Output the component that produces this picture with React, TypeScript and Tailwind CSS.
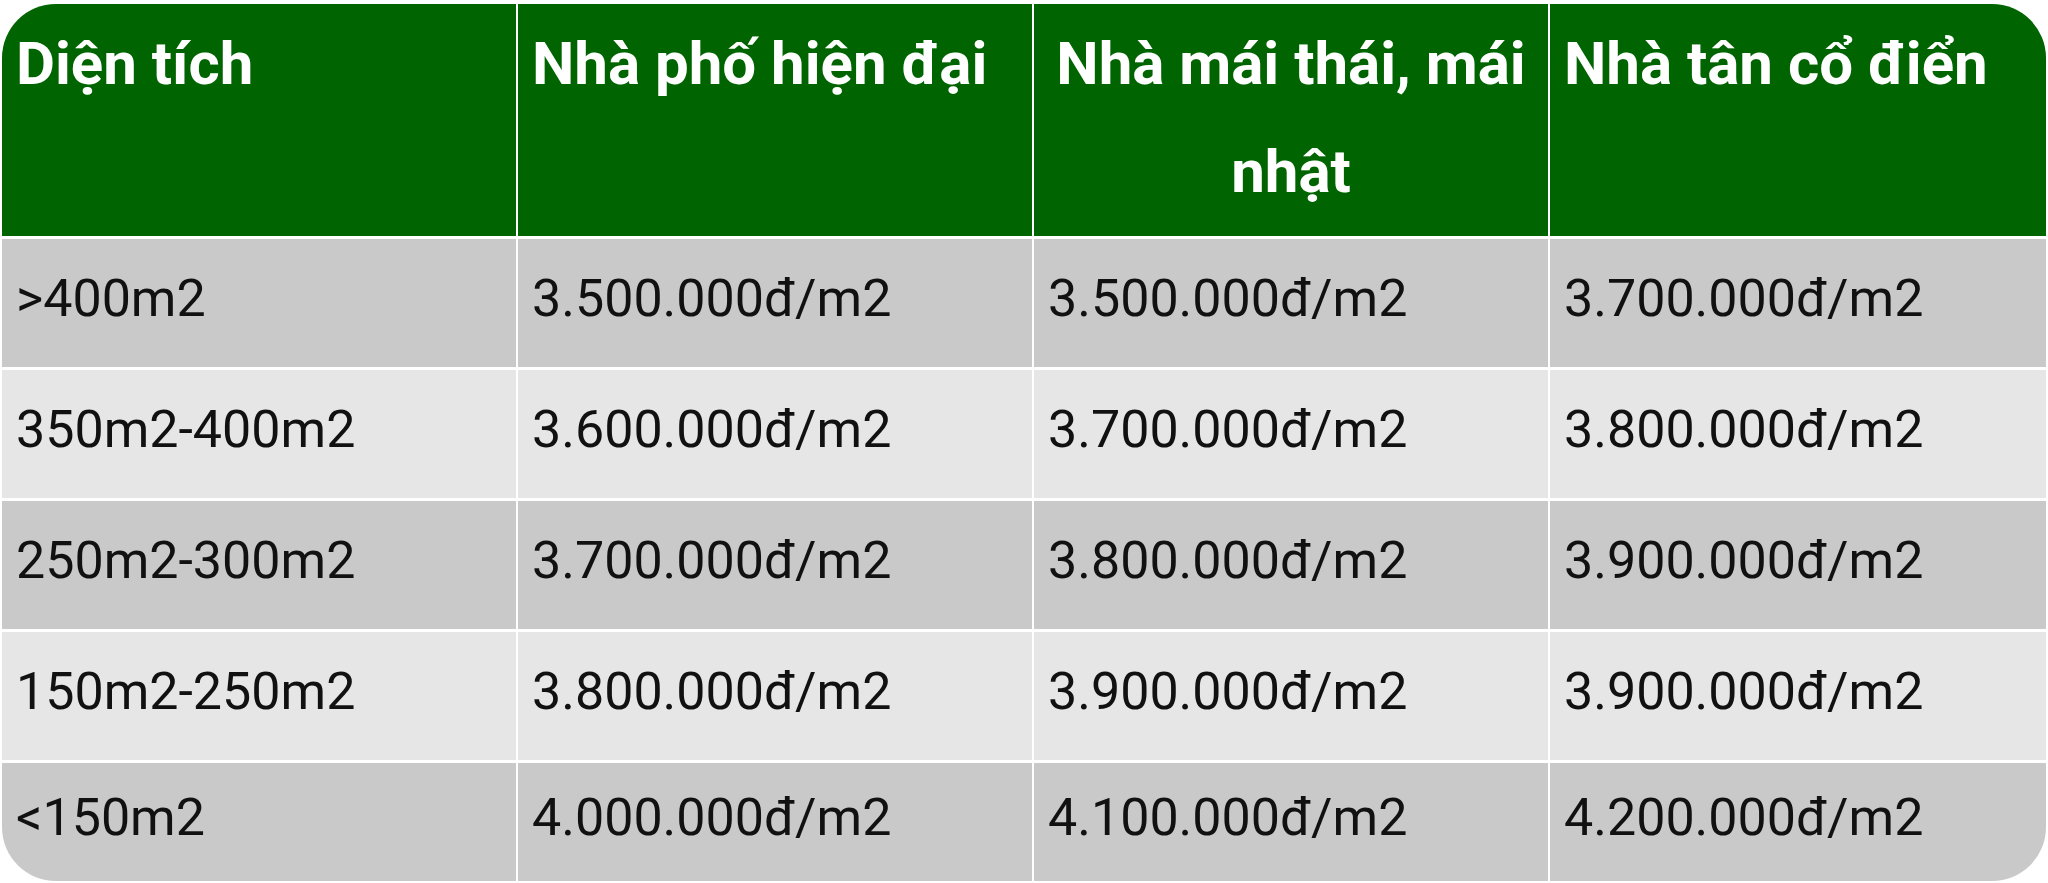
import React from 'react';

const headers = ['Diện tích', 'Nhà phố hiện đại', 'Nhà mái thái, mái nhật', 'Nhà tân cổ điển'];

const rows: string[][] = [
  ['>400m2', '3.500.000đ/m2', '3.500.000đ/m2', '3.700.000đ/m2'],
  ['350m2-400m2', '3.600.000đ/m2', '3.700.000đ/m2', '3.800.000đ/m2'],
  ['250m2-300m2', '3.700.000đ/m2', '3.800.000đ/m2', '3.900.000đ/m2'],
  ['150m2-250m2', '3.800.000đ/m2', '3.900.000đ/m2', '3.900.000đ/m2'],
  ['<150m2', '4.000.000đ/m2', '4.100.000đ/m2', '4.200.000đ/m2'],
];

function App() {
  return (
    <div className="w-[2048px] h-[883px] bg-white pt-[4px] px-[2px] pb-[2px] font-['Roboto',sans-serif]">
      <div className="h-full rounded-[54px] overflow-hidden flex flex-col gap-y-[3px] bg-white">
        {/* Header */}
        <div className="h-[232px] grid grid-cols-[514px_514px_514px_1fr] gap-x-[2px] shrink-0">
          {headers.map((h, i) => (
            <div
              key={h}
              className={
                i === 2
                  ? 'bg-[#006400] text-white font-bold text-[60px] leading-[108px] pt-[6px] px-[12px] text-center'
                  : 'bg-[#006400] text-white font-bold text-[60px] leading-[108px] pt-[6px] px-[14px]'
              }
            >
              {h}
            </div>
          ))}
        </div>

        {/* Body */}
        {rows.map((r, ri) => (
          <div
            key={ri}
            className={
              ri === rows.length - 1
                ? 'flex-1 grid grid-cols-[514px_514px_514px_1fr] gap-x-[2px]'
                : 'h-[128px] shrink-0 grid grid-cols-[514px_514px_514px_1fr] gap-x-[2px]'
            }
          >
            {r.map((c, ci) => (
              <div
                key={ci}
                className={
                  (ri % 2 === 0 ? 'bg-[#c9c9c9]' : 'bg-[#e6e6e6]') +
                  ' flex items-center px-[14px] pb-[8px] text-[52px] text-[#111] leading-none'
                }
              >
                {c}
              </div>
            ))}
          </div>
        ))}
      </div>
    </div>
  );
}

export default App;
